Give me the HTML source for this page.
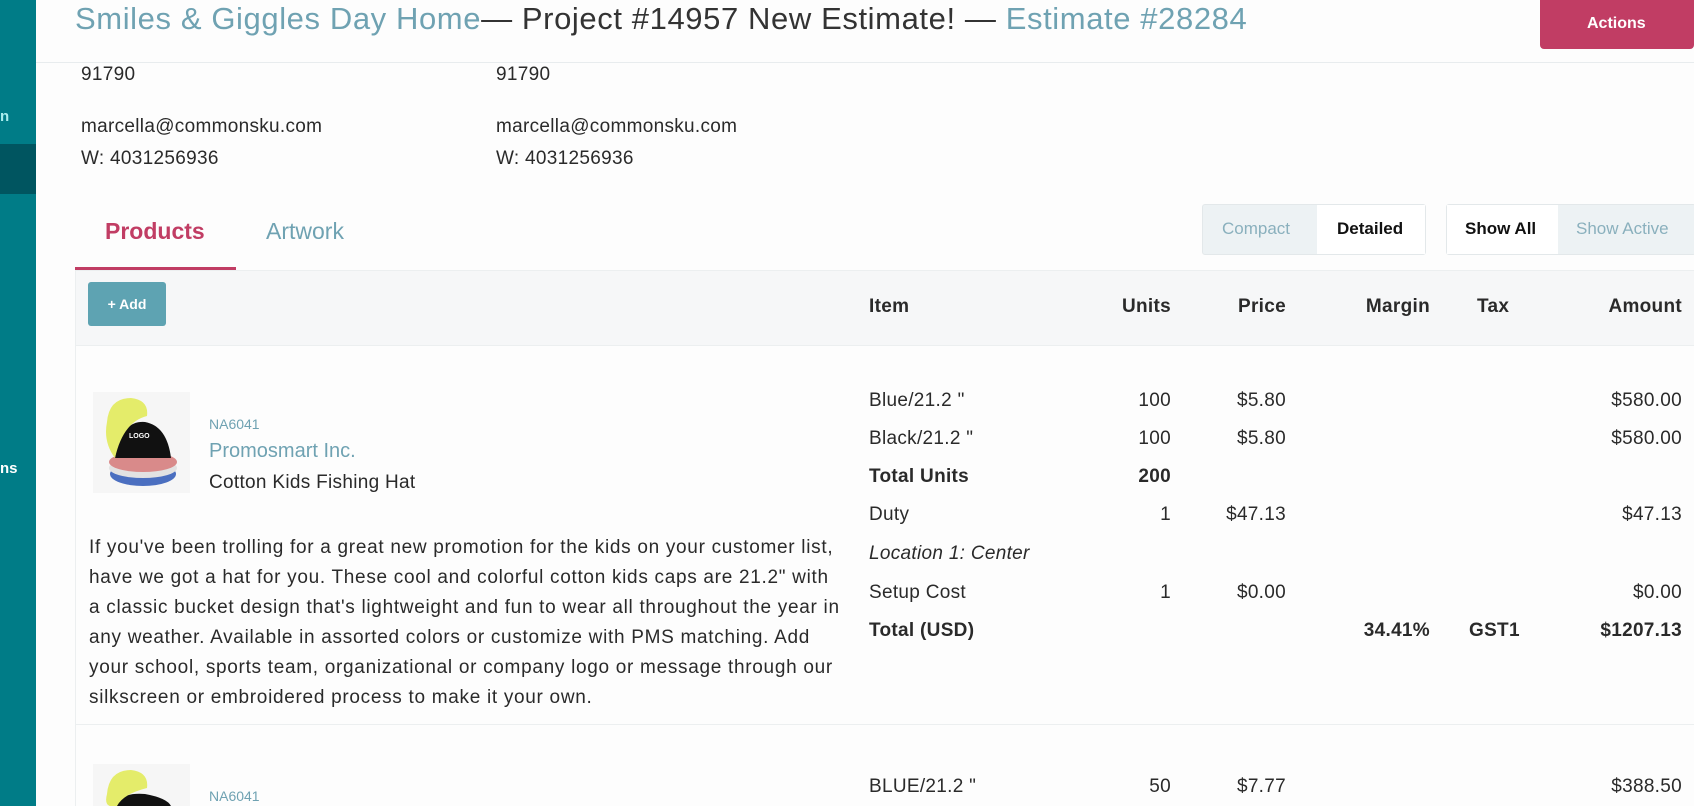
<!DOCTYPE html>
<html><head><meta charset="utf-8"><style>
*{margin:0;padding:0;box-sizing:border-box}
body{width:1694px;height:806px;overflow:hidden;background:#fdfdfd;font-family:"Liberation Sans",sans-serif;color:#2a2a2a;position:relative}
.a{position:absolute;white-space:nowrap}
.side{left:0;top:0;width:36px;height:806px;background:#007c87}
.r{text-align:right}
.b{font-weight:bold}
.t{font-size:19px;letter-spacing:0.3px}
</style></head><body>
<div class="a side"></div>
<div class="a" style="left:0;top:144px;width:36px;height:50px;background:#005560"></div>
<div class="a" style="left:0;top:108px;color:#aee;font-size:15px;font-weight:bold">n</div>
<div class="a" style="left:0;top:460px;color:#fff;font-size:15px;font-weight:bold">ns</div>
<div class="a" style="left:36px;top:62px;width:1658px;height:1px;background:#e8ecee"></div>
<div class="a" style="left:75px;top:1px;font-size:31px;font-weight:300;letter-spacing:0.6px;color:#333"><span style="color:#6fa2b2">Smiles &amp; Giggles Day Home</span>— Project #14957 New Estimate! — <span style="color:#6fa2b2">Estimate #28284</span></div>
<div class="a" style="left:1540px;top:0;width:154px;height:49px;background:#c13d64;border-radius:0 0 4px 4px;color:#fff;font-weight:bold;font-size:16px;line-height:48px;padding-left:47px">Actions</div>

<div class="a t" style="left:81px;top:64px">91790</div>
<div class="a t" style="left:496px;top:64px">91790</div>
<div class="a t" style="left:81px;top:116px">marcella@commonsku.com</div>
<div class="a t" style="left:496px;top:116px">marcella@commonsku.com</div>
<div class="a t" style="left:81px;top:148px">W: 4031256936</div>
<div class="a t" style="left:496px;top:148px">W: 4031256936</div>

<div class="a b" style="left:105px;top:218px;font-size:23px;color:#c13d64">Products</div>
<div class="a" style="left:266px;top:218px;font-size:23px;color:#6fa2b2">Artwork</div>
<div class="a" style="left:75px;top:267px;width:161px;height:3px;background:#c13d64"></div>

<div class="a" style="left:1202px;top:204px;width:224px;height:51px;border:1px solid #e3e8ea;border-radius:3px;background:#edf2f4"></div>
<div class="a" style="left:1317px;top:205px;width:108px;height:49px;background:#fff"></div>
<div class="a" style="left:1222px;top:219px;font-size:17px;color:#8ab0bd">Compact</div>
<div class="a b" style="left:1337px;top:219px;font-size:17px;color:#111">Detailed</div>
<div class="a" style="left:1446px;top:204px;width:250px;height:51px;border:1px solid #e3e8ea;border-radius:3px;background:#edf2f4"></div>
<div class="a" style="left:1447px;top:205px;width:111px;height:49px;background:#fff"></div>
<div class="a b" style="left:1465px;top:219px;font-size:17px;color:#111">Show All</div>
<div class="a" style="left:1576px;top:219px;font-size:17px;color:#8ab0bd">Show Active</div>

<div class="a" style="left:75px;top:270px;width:1619px;height:76px;background:#f6f7f8;border-top:1px solid #eceff0;border-bottom:1px solid #eceff0"></div>
<div class="a" style="left:75px;top:270px;width:1px;height:536px;background:#eceff0"></div>
<div class="a b" style="left:88px;top:282px;width:78px;height:44px;background:#5ea3b2;border-radius:3px;color:#fff;font-size:14px;line-height:44px;text-align:center">+ Add</div>
<div class="a b t" style="left:869px;top:296px">Item</div>
<div class="a b t r" style="left:1071px;top:296px;width:100px">Units</div>
<div class="a b t r" style="left:1186px;top:296px;width:100px">Price</div>
<div class="a b t r" style="left:1330px;top:296px;width:100px">Margin</div>
<div class="a b t" style="left:1477px;top:296px">Tax</div>
<div class="a b t r" style="left:1582px;top:296px;width:100px">Amount</div>

<svg class="a" style="left:93px;top:392px" width="97" height="101" viewBox="0 0 97 101">
<rect width="97" height="101" fill="#f6f6f6"/>
<ellipse cx="50" cy="82" rx="33" ry="12" fill="#4b6fc0"/>
<ellipse cx="50" cy="76" rx="34" ry="10" fill="#e2e2e2"/>
<ellipse cx="50" cy="70" rx="34" ry="10" fill="#d98a8a"/>
<path d="M22 66 Q28 28 52 30 Q74 34 78 66 Z" fill="#111"/>
<path d="M14 30 Q16 6 38 6 Q56 8 54 24 Q30 30 22 66 Q10 50 14 30Z" fill="#e4ec6a"/>
<text x="36" y="46" font-size="7" fill="#fff" font-family="Liberation Sans" font-weight="bold">LOGO</text>
</svg>
<div class="a" style="left:209px;top:416px;font-size:14px;color:#6fa2b2">NA6041</div>
<div class="a" style="left:209px;top:440px;font-size:20px;color:#6fa2b2">Promosmart Inc.</div>
<div class="a t" style="left:209px;top:472px">Cotton Kids Fishing Hat</div>

<div class="a" style="left:89px;top:533px;font-size:19px;line-height:30px;letter-spacing:0.7px">If you've been trolling for a great new promotion for the kids on your customer list,<br>have we got a hat for you. These cool and colorful cotton kids caps are 21.2" with<br>a classic bucket design that's lightweight and fun to wear all throughout the year in<br>any weather. Available in assorted colors or customize with PMS matching. Add<br>your school, sports team, organizational or company logo or message through our<br>silkscreen or embroidered process to make it your own.</div>

<div class="a t" style="left:869px;top:390px">Blue/21.2 "</div>
<div class="a t r" style="left:1071px;top:390px;width:100px">100</div>
<div class="a t r" style="left:1186px;top:390px;width:100px">$5.80</div>
<div class="a t r" style="left:1582px;top:390px;width:100px">$580.00</div>
<div class="a t" style="left:869px;top:428px">Black/21.2 "</div>
<div class="a t r" style="left:1071px;top:428px;width:100px">100</div>
<div class="a t r" style="left:1186px;top:428px;width:100px">$5.80</div>
<div class="a t r" style="left:1582px;top:428px;width:100px">$580.00</div>
<div class="a t b" style="left:869px;top:466px">Total Units</div>
<div class="a t b r" style="left:1071px;top:466px;width:100px">200</div>
<div class="a t" style="left:869px;top:504px">Duty</div>
<div class="a t r" style="left:1071px;top:504px;width:100px">1</div>
<div class="a t r" style="left:1186px;top:504px;width:100px">$47.13</div>
<div class="a t r" style="left:1582px;top:504px;width:100px">$47.13</div>
<div class="a t" style="left:869px;top:543px;font-style:italic">Location 1: Center</div>
<div class="a t" style="left:869px;top:582px">Setup Cost</div>
<div class="a t r" style="left:1071px;top:582px;width:100px">1</div>
<div class="a t r" style="left:1186px;top:582px;width:100px">$0.00</div>
<div class="a t r" style="left:1582px;top:582px;width:100px">$0.00</div>
<div class="a t b" style="left:869px;top:620px">Total (USD)</div>
<div class="a t b r" style="left:1330px;top:620px;width:100px">34.41%</div>
<div class="a t b" style="left:1469px;top:620px">GST1</div>
<div class="a t b r" style="left:1582px;top:620px;width:100px">$1207.13</div>

<div class="a" style="left:75px;top:724px;width:1619px;height:1px;background:#eceff0"></div>
<svg class="a" style="left:93px;top:764px" width="97" height="42" viewBox="0 0 97 42">
<rect width="97" height="42" fill="#f6f6f6"/>
<path d="M22 42 Q28 28 52 30 Q74 34 78 42 Z" fill="#111"/>
<path d="M14 30 Q16 6 38 6 Q56 8 54 24 Q30 30 24 42 Q10 45 14 30Z" fill="#e4ec6a"/>
</svg>
<div class="a" style="left:209px;top:788px;font-size:14px;color:#6fa2b2">NA6041</div>
<div class="a t" style="left:869px;top:776px">BLUE/21.2 "</div>
<div class="a t r" style="left:1071px;top:776px;width:100px">50</div>
<div class="a t r" style="left:1186px;top:776px;width:100px">$7.77</div>
<div class="a t r" style="left:1582px;top:776px;width:100px">$388.50</div>
</body></html>
